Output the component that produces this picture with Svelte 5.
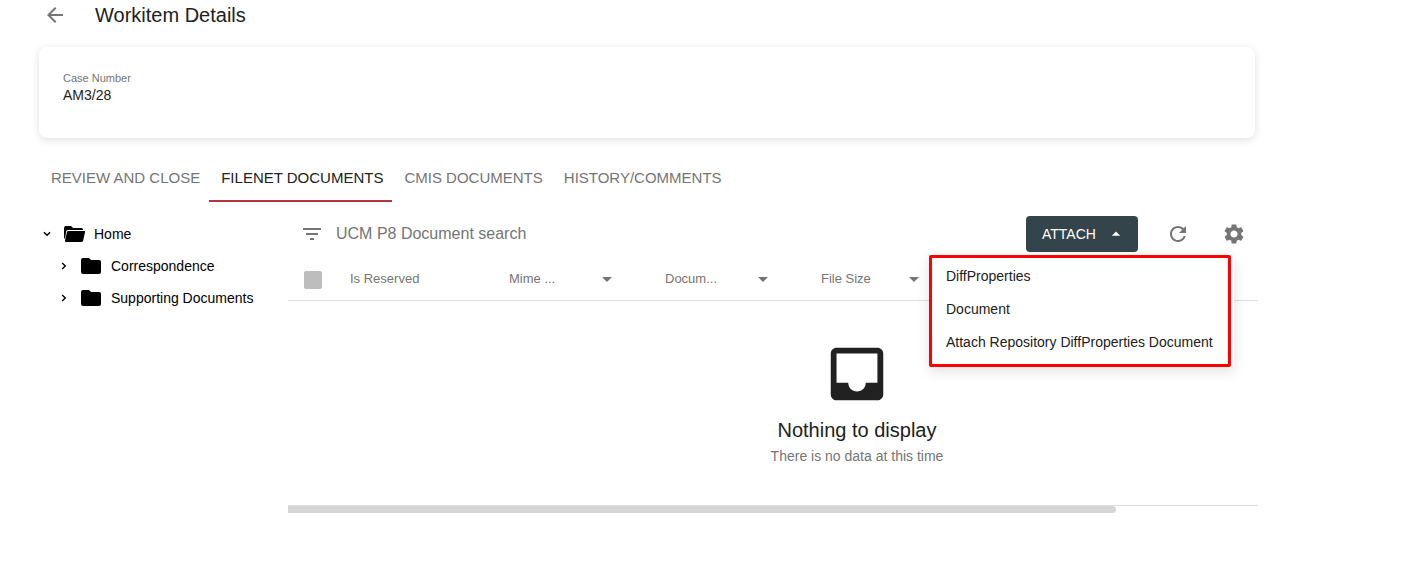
<script>
  const tabs = ['Review and close', 'Filenet documents', 'CMIS documents', 'History/comments'];
  const folders = ['Correspondence', 'Supporting Documents'];
  const columns = ['Mime ...', 'Docum...', 'File Size'];
  const actions = ['DiffProperties', 'Document', 'Attach Repository DiffProperties Document'];

  let activeTab = $state(1);
  let homeOpen = $state(true);
  let menuOpen = $state(true);
</script>

{#snippet icon(path, size = 24)}
  <svg width={size} height={size} viewBox="0 0 24 24" fill="currentColor" aria-hidden="true"><path d={path} /></svg>
{/snippet}

{#snippet chevron(open)}
  <svg class="chevron" class:open width="8" height="8" viewBox="0 0 8 8" fill="none" stroke="currentColor" stroke-width="1.4" aria-hidden="true">
    <path d="M2.2 0.9 5.3 4 2.2 7.1" />
  </svg>
{/snippet}

<div class="page">
  <header>
    <button class="icon-button" aria-label="Back">
      {@render icon('M20 11H7.83l5.59-5.59L12 4l-8 8 8 8 1.41-1.41L7.83 13H20v-2z')}
    </button>
    <h1>Workitem Details</h1>
  </header>

  <dl class="card">
    <dt>Case Number</dt>
    <dd>AM3/28</dd>
  </dl>

  <div class="tabs" role="tablist">
    {#each tabs as tab, i}
      <button role="tab" class:active={activeTab === i} aria-selected={activeTab === i} onclick={() => (activeTab = i)}>{tab}</button>
    {/each}
  </div>

  <div class="body">
    <nav class="tree" aria-label="Folders">
      <button class="node" aria-expanded={homeOpen} onclick={() => (homeOpen = !homeOpen)}>
        {@render chevron(homeOpen)}
        <svg class="folder" width="20" height="16" viewBox="0 0 20 16" fill="currentColor" aria-hidden="true">
          <path d="M2 0H7L9 2H17.5Q19 2 19 3.5V4H4.2Q2.6 4 2.3 5L0.9 13Q0 12.5 0 11V2Q0 0 2 0Z" />
          <path d="M4.5 5H20.2Q21.4 5 21 6.3L19.2 14.5Q18.8 16 17.3 16H2Q0.6 16 1 14.6L2.9 6.2Q3.2 5 4.5 5Z" />
        </svg>
        <span>Home</span>
      </button>
      {#if homeOpen}
        {#each folders as folder}
          <button class="node child">
            {@render chevron(false)}
            <svg class="folder" width="20" height="16" viewBox="0 0 20 16" fill="currentColor" aria-hidden="true">
              <path d="M2 0H8L10 2H18Q20 2 20 4V14Q20 16 18 16H2Q0 16 0 14V2Q0 0 2 0Z" />
            </svg>
            <span>{folder}</span>
          </button>
        {/each}
      {/if}
    </nav>

    <main>
      <div class="toolbar">
        <label class="search">
          {@render icon('M10 18h4v-2h-4v2zM3 6v2h18V6H3zm3 7h12v-2H6v2z')}
          <input type="text" placeholder="UCM P8 Document search" aria-label="UCM P8 Document search" />
        </label>
        <div class="attach">
          <button class="primary" aria-expanded={menuOpen} onclick={() => (menuOpen = !menuOpen)}>
            <span>ATTACH</span>
            {@render icon('M7 14l5-5 5 5z', 20)}
          </button>
          {#if menuOpen}
            <div class="paper">
              <ul role="menu">
                {#each actions as action}
                  <li role="none"><button role="menuitem">{action}</button></li>
                {/each}
              </ul>
            </div>
          {/if}
        </div>
        <button class="icon-button" aria-label="Refresh">
          {@render icon('M17.65 6.35C16.2 4.9 14.21 4 12 4c-4.42 0-7.99 3.58-7.99 8s3.57 8 7.99 8c3.73 0 6.84-2.55 7.73-6h-2.08c-.82 2.33-3.04 4-5.65 4-3.31 0-6-2.69-6-6s2.69-6 6-6c1.66 0 3.14.69 4.22 1.78L13 11h7V4l-2.35 2.35z')}
        </button>
        <button class="icon-button" aria-label="Settings">
          {@render icon('M19.14 12.94c.04-.3.06-.61.06-.94 0-.32-.02-.64-.07-.94l2.03-1.58c.18-.14.23-.41.12-.61l-1.92-3.32c-.12-.22-.37-.29-.59-.22l-2.39.96c-.5-.38-1.03-.7-1.62-.94l-.36-2.54c-.04-.24-.24-.41-.48-.41h-3.84c-.24 0-.43.17-.47.41l-.36 2.54c-.59.24-1.13.57-1.62.94l-2.39-.96c-.22-.08-.47 0-.59.22L2.74 8.87c-.12.21-.08.47.12.61l2.03 1.58c-.05.3-.09.63-.09.94s.02.64.07.94l-2.03 1.58c-.18.14-.23.41-.12.61l1.92 3.32c.12.22.37.29.59.22l2.39-.96c.5.38 1.03.7 1.62.94l.36 2.54c.05.24.24.41.48.41h3.84c.24 0 .44-.17.47-.41l.36-2.54c.59-.24 1.13-.56 1.62-.94l2.39.96c.22.08.47 0 .59-.22l1.92-3.32c.12-.22.07-.47-.12-.61l-2.01-1.58zM12 15.6c-1.98 0-3.6-1.62-3.6-3.6s1.62-3.6 3.6-3.6 3.6 1.62 3.6 3.6-1.62 3.6-3.6 3.6z')}
        </button>
      </div>

      <div class="scroller">
        <table>
          <thead>
            <tr>
              <th class="check"><input type="checkbox" disabled aria-label="Select all documents" /></th>
              <th class="reserved">Is Reserved</th>
              {#each columns as column, i}
                <th class="sortable" class:narrow={i === columns.length - 1}>
                  <button>
                    <span>{column}</span>
                    {@render icon('M7 10l5 5 5-5z')}
                  </button>
                </th>
              {/each}
              <th></th>
            </tr>
          </thead>
          <tbody>
            <tr>
              <td colspan="6">
                <div class="empty">
                  {@render icon('M19 3H4.99c-1.11 0-1.98.89-1.98 2L3 19c0 1.1.88 2 1.99 2H19c1.1 0 2-.9 2-2V5c0-1.11-.9-2-2-2zm0 12h-4c0 1.66-1.35 3-3 3s-3-1.34-3-3H4.99V5H19v10z', 70)}
                  <h2>Nothing to display</h2>
                  <p>There is no data at this time</p>
                </div>
              </td>
            </tr>
          </tbody>
        </table>
      </div>
      <div class="track"><div class="thumb"></div></div>
    </main>
  </div>
</div>

<style>
  :global(body) {
    background: #fff;
  }

  .page {
    padding: 0 157px 24px 39px;
    color: #212121;
    font: 14px/20px "Liberation Sans", Arial, sans-serif;
  }

  button {
    padding: 0;
    border: 0;
    background: none;
    color: inherit;
    font: inherit;
    cursor: pointer;
  }

  svg {
    display: block;
    flex: none;
  }

  .icon-button {
    padding: 4px;
    color: #757575;
  }

  header {
    display: flex;
    align-items: center;
    gap: 24px;
    height: 30px;
  }

  h1,
  h2 {
    margin: 0;
    font-size: 20px;
    font-weight: 400;
    line-height: 32px;
  }

  .card {
    margin: 17px 3px 0 0;
    padding: 24px 24px 33px;
    border-radius: 8px;
    box-shadow: 0 2px 8px rgba(0, 0, 0, 0.12);
  }

  dt {
    color: #757575;
    font-size: 11px;
    line-height: 14px;
  }

  dd {
    margin: 0;
  }

  .tabs {
    display: flex;
    margin-top: 16px;
  }

  .tabs button {
    height: 48px;
    padding: 2px 9px 0 12px;
    border-bottom: 2px solid transparent;
    color: #757575;
    font-size: 15px;
    text-transform: uppercase;
  }

  .tabs .active {
    border-color: #ae3740;
    color: #212121;
  }

  .body {
    display: flex;
  }

  .tree {
    display: flex;
    flex: 0 0 249px;
    flex-direction: column;
    padding-top: 16px;
  }

  .node {
    display: flex;
    align-items: center;
    gap: 10px;
    height: 32px;
    padding-left: 4px;
    color: #000;
  }

  .child {
    padding-left: 21px;
  }

  .folder {
    overflow: visible;
  }

  .chevron {
    margin-right: 3px;
  }

  .chevron.open {
    transform: rotate(90deg);
  }

  main {
    flex: 1;
    min-width: 0;
  }

  .toolbar {
    display: flex;
    align-items: center;
    gap: 24px;
    padding: 14px 8px 6px 12px;
  }

  .search {
    display: flex;
    flex: 1;
    align-items: center;
    gap: 12px;
    min-width: 0;
    color: #757575;
  }

  .search input {
    flex: 1;
    min-width: 0;
    padding: 0;
    border: 0;
    outline: 0;
    background: none;
    color: inherit;
    font: 16px/24px "Liberation Sans", Arial, sans-serif;
  }

  .search input::placeholder {
    color: #757575;
    opacity: 1;
  }

  .attach {
    position: relative;
  }

  .primary {
    display: flex;
    align-items: center;
    justify-content: space-between;
    gap: 8px;
    min-width: 112px;
    height: 36px;
    padding: 0 12px 0 16px;
    border-radius: 4px;
    background: #33444b;
    color: #fff;
  }

  .paper {
    position: absolute;
    top: 39px;
    right: -96px;
    z-index: 1;
    box-sizing: border-box;
    min-width: 305px;
    padding-right: 3px;
    border-radius: 4px;
    background: #fff;
    box-shadow: 0 4px 14px rgba(0, 0, 0, 0.12);
  }

  ul {
    margin: 0;
    padding: 1px 0 6px;
    border: 3px solid #f00;
    border-radius: 2px;
    list-style: none;
  }

  ul button {
    width: 100%;
    height: 33px;
    padding: 0 10px 0 14px;
    text-align: left;
    white-space: nowrap;
  }

  .scroller {
    overflow-x: auto;
    border-bottom: 1px solid #dedede;
    scrollbar-width: none;
  }

  table {
    width: 1138px;
    border-collapse: collapse;
    table-layout: fixed;
  }

  th {
    height: 42px;
    padding: 0;
    border-bottom: 1px solid #dedede;
    color: #757575;
    font-size: 13px;
    font-weight: 400;
    text-align: left;
  }

  td {
    padding: 0;
  }

  .check {
    width: 62px;
  }

  .reserved {
    width: 159px;
  }

  .sortable {
    width: 110px;
    padding-right: 46px;
  }

  .narrow {
    width: 105px;
  }

  .sortable button {
    display: flex;
    align-items: center;
    justify-content: space-between;
    width: 100%;
  }

  input[type="checkbox"] {
    display: block;
    width: 18px;
    height: 18px;
    margin: 2px 0 0 16px;
    border-radius: 2px;
    background: #bdbdbd;
    appearance: none;
  }

  .empty {
    display: flex;
    flex-direction: column;
    align-items: center;
    padding: 38px 0 39px;
  }

  h2 {
    margin-top: 5px;
  }

  p {
    margin: 0;
    color: #757575;
  }

  .thumb {
    width: 85.4%;
    height: 7px;
    border-radius: 0 4px 4px 0;
    background: #d6d6d6;
  }
</style>
